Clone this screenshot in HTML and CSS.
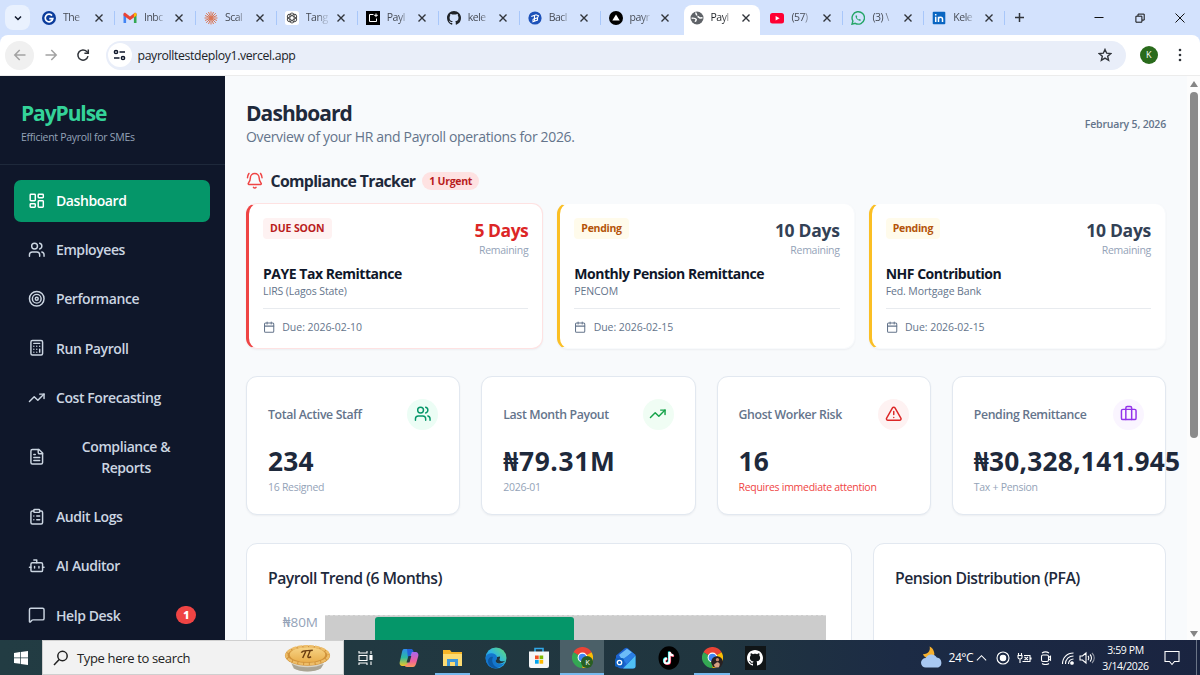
FILE: index.html
```html
<!DOCTYPE html>
<html lang="en">
<head>
<meta charset="utf-8">
<title>PayPulse</title>
<link rel="stylesheet" href="styles.css">
</head>
<body>
<svg class="defs" width="0" height="0">
  <defs>
    <symbol id="users" viewBox="0 0 24 24"><path d="M16 21v-2a4 4 0 0 0-4-4H6a4 4 0 0 0-4 4v2"/><circle cx="9" cy="7" r="4"/><path d="M22 21v-2a4 4 0 0 0-3-3.87M16 3.13a4 4 0 0 1 0 7.75"/></symbol>
    <symbol id="trend" viewBox="0 0 24 24"><path d="M22 7l-8.5 8.5-5-5L2 17"/><path d="M16 7h6v6"/></symbol>
    <symbol id="calendar" viewBox="0 0 24 24"><path d="M8 2v4M16 2v4M3 10h18"/><rect x="3" y="4" width="18" height="18" rx="2"/></symbol>
    <symbol id="close" viewBox="0 0 10 10"><path d="M1.5 1.5l7 7M8.5 1.5l-7 7"/></symbol>
    <symbol id="github" viewBox="0 0 16 16"><path fill="currentColor" stroke="none" d="M8 0C3.58 0 0 3.58 0 8c0 3.54 2.29 6.53 5.47 7.59.4.07.55-.17.55-.38 0-.19-.01-.82-.01-1.49-2.01.37-2.53-.49-2.69-.94-.09-.23-.48-.94-.82-1.13-.28-.15-.68-.52-.01-.53.63-.01 1.08.58 1.23.82.72 1.21 1.87.87 2.33.66.07-.52.28-.87.51-1.07-1.78-.2-3.64-.89-3.64-3.95 0-.87.31-1.59.82-2.15-.08-.2-.36-1.02.08-2.12 0 0 .67-.21 2.2.82.64-.18 1.32-.27 2-.27s1.36.09 2 .27c1.53-1.04 2.2-.82 2.2-.82.44 1.1.16 1.92.08 2.12.51.56.82 1.27.82 2.15 0 3.07-1.87 3.75-3.65 3.95.29.25.54.73.54 1.48 0 1.07-.01 1.93-.01 2.2 0 .21.15.46.55.38A8.01 8.01 0 0 0 16 8c0-4.42-3.58-8-8-8z"/></symbol>
    <symbol id="chrome" viewBox="0 0 24 24"><path fill="#ea4335" stroke="none" d="M12 12L1.6 6a12 12 0 0 1 20.8 0z"/><path fill="#34a853" stroke="none" d="M12 12v12A12 12 0 0 1 1.6 6z"/><path fill="#fbbc04" stroke="none" d="M12 12L22.4 6A12 12 0 0 1 12 24z"/><circle cx="12" cy="12" r="5.6" fill="#fff" stroke="none"/><circle cx="12" cy="12" r="4.4" fill="#4285f4" stroke="none"/></symbol>
    <linearGradient id="cop1" x1="0" y1="0" x2="0" y2="1"><stop offset="0" stop-color="#2d8cf0"/><stop offset=".5" stop-color="#2cb9a0"/><stop offset="1" stop-color="#f3c623"/></linearGradient>
    <linearGradient id="cop2" x1="0" y1="0" x2="0" y2="1"><stop offset="0" stop-color="#a866f0"/><stop offset=".6" stop-color="#ef5f9c"/><stop offset="1" stop-color="#fb9a5b"/></linearGradient>
    <linearGradient id="edge1" x1="0" y1="1" x2="1" y2="0"><stop offset="0" stop-color="#1274d2"/><stop offset=".5" stop-color="#2db5e6"/><stop offset="1" stop-color="#64dc6e"/></linearGradient>
    <linearGradient id="pie1" x1="0" y1="0" x2="0" y2="1"><stop offset="0" stop-color="#f7d486"/><stop offset="1" stop-color="#e9ae4c"/></linearGradient>
  </defs>
</svg>

<header class="browser">
  <div class="tabs">
    <div class="tab-menu"><svg class="ln" width="10" height="10" viewBox="0 0 10 10"><path d="M2 3.5l3 3 3-3"/></svg></div>
    <div class="tab"><svg class="fav" viewBox="0 0 14 14"><circle cx="7" cy="7" r="7" fill="#0b3c9c"/><path d="M10 4.6a3.8 3.8 0 1 0 .8 3H7.300" fill="none" stroke="#fff" stroke-width="1.7"/></svg><span class="tab-title">The</span><svg class="x"><use href="#close"/></svg></div>
    <div class="tab"><svg class="fav" viewBox="0 0 14 14"><path d="M.5 3v9h2.600V5.500z" fill="#4285f4"/><path d="M13.500 3v9h-2.600V5.500z" fill="#34a853"/><path d="M.5 3c0-1.200 1.500-1.500 2.300-.8L7 5.500l4.200-3.300c.8-.7 2.300-.4 2.300.8v1.500L7 9.300.5 4.500z" fill="#ea4335"/><path d="M13.500 3v1.500l-2.600 2V2.500c1-.9 2.600-.6 2.600.5z" fill="#fbbc04"/></svg><span class="tab-title">Inbc</span><svg class="x"><use href="#close"/></svg></div>
    <div class="tab"><svg class="fav" viewBox="0 0 14 14"><path d="M7 .5v13M.5 7h13M2.200 2.200l9.600 9.600M11.800 2.200l-9.600 9.600M4.500 1l5 12M9.500 1l-5 12M1 4.500l12 5M1 9.500l12-5" stroke="#d97757" stroke-width="1"/></svg><span class="tab-title">Scal</span><svg class="x"><use href="#close"/></svg></div>
    <div class="tab"><svg class="fav" viewBox="0 0 14 14"><rect width="14" height="14" rx="2.500" fill="#fff"/><g fill="none" stroke="#444" stroke-width=".9"><rect x="4.900" y="2" width="4.200" height="10" rx="2.100"/><rect x="4.900" y="2" width="4.200" height="10" rx="2.100" transform="rotate(60 7 7)"/><rect x="4.900" y="2" width="4.200" height="10" rx="2.100" transform="rotate(120 7 7)"/></g></svg><span class="tab-title">Tang</span><svg class="x"><use href="#close"/></svg></div>
    <div class="tab"><svg class="fav" viewBox="0 0 14 14"><rect width="14" height="14" fill="#000"/><path d="M7.500 3.500H3.500v7h7V7.500M10 2.500v3.600M8.200 4.300h3.600" fill="none" stroke="#fff" stroke-width="1"/></svg><span class="tab-title">Payl</span><svg class="x"><use href="#close"/></svg></div>
    <div class="tab"><svg class="fav dark"><use href="#github"/></svg><span class="tab-title">kele</span><svg class="x"><use href="#close"/></svg></div>
    <div class="tab"><svg class="fav" viewBox="0 0 14 14"><circle cx="7" cy="7" r="6.600" fill="#1c51b9"/><path d="M3.300 5.500L8 3.800l2.500 1-1 2-4.500 1.400M5 8.200v2.500l4.500-1.600V6.800M6.500 4.500v5.500" fill="none" stroke="#fff" stroke-width="1.100"/></svg><span class="tab-title">Bacl</span><svg class="x"><use href="#close"/></svg></div>
    <div class="tab no-line"><svg class="fav" viewBox="0 0 14 14"><circle cx="7" cy="7" r="7" fill="#000"/><path d="M7 3.500l3.700 6H3.300z" fill="#fff"/></svg><span class="tab-title">payr</span><svg class="x"><use href="#close"/></svg></div>
    <div class="tab active no-line"><svg class="fav" viewBox="0 0 14 14"><circle cx="7" cy="7" r="6.500" fill="#5f6368"/><path d="M1.600 7.200c2-.2 4 0 4.600 1.200.4 1-1 1-.8 2.400M6 1.500c-.5 1.500 1 1.700.5 3M7.500 5.500c1.500.2 1.300 1.500 2.700 1.500l2.300-.2" fill="none" stroke="#fff" stroke-width="1.500"/></svg><span class="tab-title">Payl</span><svg class="x"><use href="#close"/></svg></div>
    <div class="tab"><svg class="fav" viewBox="0 0 14 14"><rect y="2" width="14" height="10.500" rx="2.500" fill="#ff0033"/><path d="M5.600 5l4 2.250-4 2.250z" fill="#fff"/></svg><span class="tab-title">(57)</span><svg class="x"><use href="#close"/></svg></div>
    <div class="tab"><svg class="fav" viewBox="0 0 14 14"><path d="M1 13.200l.9-3.200a6.200 6.200 0 1 1 2.300 2.300z" fill="none" stroke="#25a567" stroke-width="1.400"/><path d="M5.200 4c-1.400.8-.4 3 .8 4.200s3.300 2.200 4.100.9l-1.500-1.100-.9.600c-.9-.5-1.500-1.100-1.900-2l.5-.8z" fill="#25a567"/></svg><span class="tab-title">(3) \</span><svg class="x"><use href="#close"/></svg></div>
    <div class="tab"><svg class="fav" viewBox="0 0 14 14"><rect x=".7" y=".7" width="12.600" height="12.600" rx="1" fill="#0a66c2"/><path d="M3.700 5.700v5.300M6.500 5.700v5.300M6.500 8c0-2.500 4-2.500 4 0v3M3.700 3v1.400" fill="none" stroke="#fff" stroke-width="1.500"/></svg><span class="tab-title">Kele</span><svg class="x"><use href="#close"/></svg></div>
    <svg class="new-tab ln" width="11" height="11" viewBox="0 0 11 11"><path d="M5.500 1v9M1 5.500h9"/></svg>
    <div class="window-buttons">
      <svg class="wb" viewBox="0 0 12 12"><path d="M1.500 5.500h9"/></svg>
      <svg class="wb" viewBox="0 0 12 12"><path d="M1.900 4.200h6v6h-6zM4 4V2.100h6.200v6H8"/></svg>
      <svg class="wb" viewBox="0 0 12 12"><path d="M1.500 1.500l9 9M10.500 1.500l-9 9"/></svg>
    </div>
  </div>
  <div class="toolbar">
    <div class="back"><svg class="ln" width="14" height="14" viewBox="0 0 14 14"><path d="M12.500 7H2M6.700 2L1.800 7l4.900 5"/></svg></div>
    <svg class="ln fwd" width="14" height="14" viewBox="0 0 14 14"><path d="M1.500 7H12M7.300 2l4.900 5-4.900 5"/></svg>
    <svg class="ln reload" width="14" height="14" viewBox="0 0 14 14"><path d="M12 8.200A5.100 5.100 0 1 1 10.800 3.600L12.200 5"/><path d="M12.300 1.400v3.900H8.400"/></svg>
    <div class="address">
      <div class="site-info"><svg class="ln" width="13" height="12" viewBox="0 0 13 12"><circle cx="3" cy="3" r="1.600"/><path d="M6.500 3H12M1 9h5.500"/><circle cx="10" cy="9" r="1.600"/></svg></div>
      <span class="url">payrolltestdeploy1.vercel.app</span>
      <svg class="ln star" width="14" height="14" viewBox="0 0 24 24"><path d="M12 2.500l2.900 6.400 7 .7-5.300 4.600 1.600 6.900-6.200-3.700-6.200 3.700 1.600-6.900L2.100 9.600l7-.7z"/></svg>
    </div>
    <div class="avatar">K</div>
    <svg class="kebab" width="4" height="14" viewBox="0 0 4 14"><circle cx="2" cy="2" r="1.300"/><circle cx="2" cy="7" r="1.300"/><circle cx="2" cy="12" r="1.300"/></svg>
  </div>
</header>

<div class="app">
  <aside class="sidebar">
    <div class="brand">
      <div class="brand-name">PayPulse</div>
      <div class="brand-sub">Efficient Payroll for SMEs</div>
    </div>
    <nav class="nav">
      <a class="nav-item current"><svg class="ic" viewBox="0 0 24 24"><rect x="3" y="3" width="7" height="9" rx="1"/><rect x="14" y="3" width="7" height="5" rx="1"/><rect x="14" y="12" width="7" height="9" rx="1"/><rect x="3" y="16" width="7" height="5" rx="1"/></svg><span>Dashboard</span></a>
      <a class="nav-item"><svg class="ic"><use href="#users"/></svg><span>Employees</span></a>
      <a class="nav-item"><svg class="ic" viewBox="0 0 24 24"><circle cx="12" cy="12" r="10"/><circle cx="12" cy="12" r="6"/><circle cx="12" cy="12" r="2"/></svg><span>Performance</span></a>
      <a class="nav-item"><svg class="ic" viewBox="0 0 24 24"><rect x="4" y="2" width="16" height="20" rx="2"/><path d="M8 6h8M16 14v4M16 10h.01M12 10h.01M8 10h.01M12 14h.01M8 14h.01M12 18h.01M8 18h.01"/></svg><span>Run Payroll</span></a>
      <a class="nav-item"><svg class="ic"><use href="#trend"/></svg><span>Cost Forecasting</span></a>
      <a class="nav-item"><svg class="ic" viewBox="0 0 24 24"><path d="M15 2H6a2 2 0 0 0-2 2v16a2 2 0 0 0 2 2h12a2 2 0 0 0 2-2V7z"/><path d="M14 2v4a2 2 0 0 0 2 2h4M10 9H8M16 13H8M16 17H8"/></svg><span class="wide">Compliance &amp;<br>Reports</span></a>
      <a class="nav-item"><svg class="ic" viewBox="0 0 24 24"><rect x="8" y="2" width="8" height="4" rx="1"/><path d="M16 4h2a2 2 0 0 1 2 2v14a2 2 0 0 1-2 2H6a2 2 0 0 1-2-2V6a2 2 0 0 1 2-2h2M12 11h4M12 16h4M8 11h.01M8 16h.01"/></svg><span>Audit Logs</span></a>
      <a class="nav-item"><svg class="ic" viewBox="0 0 24 24"><path d="M12 8V4H8"/><rect x="4" y="8" width="16" height="12" rx="2"/><path d="M2 14h2M20 14h2M15 13v2M9 13v2"/></svg><span>AI Auditor</span></a>
      <a class="nav-item"><svg class="ic" viewBox="0 0 24 24"><path d="M22 17a2 2 0 0 1-2 2H6.800a2 2 0 0 0-1.400.6l-2.200 2.200A.7.7 0 0 1 2 21.300V5a2 2 0 0 1 2-2h16a2 2 0 0 1 2 2z"/></svg><span>Help Desk</span><b class="count">1</b></a>
    </nav>
  </aside>

  <main class="main">
    <div class="page-head">
      <div>
        <h1>Dashboard</h1>
        <p class="lead">Overview of your HR and Payroll operations for 2026.</p>
      </div>
      <div class="date">February 5, 2026</div>
    </div>

    <div class="tracker-head">
      <svg class="ic bell" viewBox="0 0 24 24"><path d="M10.268 21a2 2 0 0 0 3.464 0M22 8c0-2.300-.8-4.300-2-6M3.262 15.326A1 1 0 0 0 4 17h16a1 1 0 0 0 .740-1.673C19.410 13.956 18 12.499 18 8A6 6 0 0 0 6 8c0 4.499-1.411 5.956-2.738 7.326M4 2C2.800 3.700 2 5.700 2 8"/></svg>
      <h2>Compliance Tracker</h2>
      <span class="urgent">1 Urgent</span>
    </div>

    <section class="deadlines">
      <article class="deadline soon">
        <div class="dl-top"><span class="tag">DUE SOON</span><div class="dl-days"><div class="days">5 Days</div><div class="remaining">Remaining</div></div></div>
        <h3>PAYE Tax Remittance</h3><p class="agency">LIRS (Lagos State)</p>
        <div class="due"><svg class="ic cal"><use href="#calendar"/></svg><span>Due: 2026-02-10</span></div>
      </article>
      <article class="deadline">
        <div class="dl-top"><span class="tag">Pending</span><div class="dl-days"><div class="days">10 Days</div><div class="remaining">Remaining</div></div></div>
        <h3>Monthly Pension Remittance</h3><p class="agency">PENCOM</p>
        <div class="due"><svg class="ic cal"><use href="#calendar"/></svg><span>Due: 2026-02-15</span></div>
      </article>
      <article class="deadline">
        <div class="dl-top"><span class="tag">Pending</span><div class="dl-days"><div class="days">10 Days</div><div class="remaining">Remaining</div></div></div>
        <h3>NHF Contribution</h3><p class="agency">Fed. Mortgage Bank</p>
        <div class="due"><svg class="ic cal"><use href="#calendar"/></svg><span>Due: 2026-02-15</span></div>
      </article>
    </section>

    <section class="stats">
      <article class="stat">
        <div class="stat-top"><span>Total Active Staff</span><div class="bubble emerald"><svg class="ic"><use href="#users"/></svg></div></div>
        <div class="value">234</div><div class="note">16 Resigned</div>
      </article>
      <article class="stat">
        <div class="stat-top"><span>Last Month Payout</span><div class="bubble green"><svg class="ic"><use href="#trend"/></svg></div></div>
        <div class="value short">₦79.31M</div><div class="note">2026-01</div>
      </article>
      <article class="stat">
        <div class="stat-top"><span>Ghost Worker Risk</span><div class="bubble red"><svg class="ic" viewBox="0 0 24 24"><path d="M21.730 18l-8-14a2 2 0 0 0-3.480 0l-8 14A2 2 0 0 0 4 21h16a2 2 0 0 0 1.730-3M12 9v4M12 17h.01"/></svg></div></div>
        <div class="value">16</div><div class="note alert">Requires immediate attention</div>
      </article>
      <article class="stat">
        <div class="stat-top"><span>Pending Remittance</span><div class="bubble purple"><svg class="ic" viewBox="0 0 24 24"><rect x="2" y="6" width="20" height="14" rx="2"/><path d="M16 20V4a2 2 0 0 0-2-2h-4a2 2 0 0 0-2 2v16"/></svg></div></div>
        <div class="value">₦30,328,141.945</div><div class="note">Tax + Pension</div>
      </article>
    </section>

    <section class="charts">
      <article class="panel">
        <h4>Payroll Trend (6 Months)</h4>
        <div class="chart"><span class="axis">₦80M</span><div class="plot"><div class="bar"></div></div></div>
      </article>
      <article class="panel"><h4>Pension Distribution (PFA)</h4></article>
    </section>
  </main>

  <div class="scrollbar"><i class="up"></i><i class="thumb"></i><i class="down"></i></div>
</div>

<footer class="taskbar">
  <div class="start"><svg width="14" height="16" viewBox="0 0 14 16"><path fill="#fff" d="M0 3l6-.9v5.500H0zM6.700 2L14 .9v6.700H6.700zM0 8.300h6v5.500l-6-.9zM6.700 8.300H14V15l-7.300-1.100z"/></svg></div>
  <div class="search">
    <svg class="ln" width="16" height="16" viewBox="0 0 16 16"><circle cx="9.500" cy="6" r="4.700"/><path d="M6.200 9.500L1 15"/></svg>
    <span>Type here to search</span>
    <svg class="pie" width="47" height="28" viewBox="0 0 49 28"><path d="M5 14l5 11c7 4 21 4 28 0l6-11z" fill="#d8d3c6"/><path d="M8 20l2.500 5c7 4 21 4 28 0l3-5c-9 5-25 5-33.500 0z" fill="#aaa494"/><ellipse cx="24.500" cy="11.500" rx="23.500" ry="10.500" fill="#d0923a"/><ellipse cx="24.500" cy="11" rx="22" ry="9.300" fill="none" stroke="#edbd68" stroke-width="2.500" stroke-dasharray="5 1"/><ellipse cx="24.500" cy="10.500" rx="18.500" ry="7.800" fill="url(#pie1)"/><path d="M18 8.500c2-3.500 5-1.500 12-2.500M23 6.500l-3.500 7.500M27.500 6l-2.500 6c-.6 1.800 1.700 1.800 3.200.6" fill="none" stroke="#6b3d10" stroke-width="1.500"/></svg>
  </div>
  <div class="task"><svg width="16" height="16" viewBox="0 0 16 16" fill="none" stroke="#fff" stroke-width="1.100"><path d="M1 1v2h8V1M1 15v-2h8v2M1 5.500h8v5H1zM13 1v3M13 11.500V15"/><path d="M12 5.500h2v4h-2z" fill="#fff"/></svg></div>
  <div class="task"><svg width="22" height="22" viewBox="0 0 22 22"><path d="M6 2h6c2 0 2.500 1 3 3l-3 9c-1 4-2 5-4 5H5c-3 0-4-2-3-5L4 5c.5-2 1-3 2-3z" fill="url(#cop1)"/><path d="M14 5h3c3 0 4 2 3 5l-2 7c-.7 2-1.500 3-3 3H9c-1.500 0-2.300-1-2.500-2 2 0 3-.5 4-4z" fill="url(#cop2)"/><path d="M9 2h4c1.500 0 2.200 1 2.600 3h-2L11 14l-1-2z" fill="#2460d8"/><path d="M10.500 9l-2 6.500h3l1.800-6.500z" fill="#21383f"/></svg></div>
  <div class="task open"><svg width="21" height="20" viewBox="0 0 21 20"><path d="M1 2h7l1.500 2H20v14H1z" fill="#f5b529"/><path d="M1 6h19v12H1z" fill="#fcdb72"/><path d="M5 18v-7h11v7h-3v-4H8v4z" fill="#3f97d8"/></svg></div>
  <div class="task"><svg width="22" height="22" viewBox="0 0 22 22"><circle cx="11" cy="11" r="10.500" fill="url(#edge1)"/><path d="M.8 10C2 5 11 5 12 10c.5 3-2 3-1 5 1.500 3 6 2.500 9 .5C16 22 7 23 3 18 1 15.500.6 13 .8 10z" fill="#1476ce"/><path d="M8 10c-2 4 0 9 5 11-5 1-10-2-10-7 0-3 3-5 5-4z" fill="#0c59a4"/><path d="M12 10c.5 3-2 3-1 5 2 2.500 7 2 9.500-1.500-2 1.500-6 1-6-1 0-1 .8-1.500.5-3z" fill="#21343f"/></svg></div>
  <div class="task"><svg width="22" height="22" viewBox="0 0 22 22"><path d="M7 5V1.500h8V5" fill="none" stroke="#31a8e8" stroke-width="1.600"/><path d="M1 4.500h20V19a2 2 0 0 1-2 2H3a2 2 0 0 1-2-2z" fill="#f5f7f8"/><path d="M7 8.500h3.700v3.700H7z" fill="#f25022"/><path d="M11.500 8.500h3.700v3.700h-3.700z" fill="#7fba00"/><path d="M7 13h3.700v3.700H7z" fill="#00a4ef"/><path d="M11.500 13h3.700v3.700h-3.700z" fill="#ffb900"/></svg></div>
  <div class="task open focus"><svg width="21" height="21"><use href="#chrome"/></svg><b class="profile">K</b></div>
  <div class="task"><svg width="21" height="22" viewBox="0 0 21 22"><path d="M1 8.500L9.500 1.400a3 3 0 0 1 3.500 0L20.500 8v11a2.500 2.500 0 0 1-2.500 2.500H6a5 5 0 0 1-5-5z" fill="#1c62d0"/><path d="M4 8l8-6.300 5 3.500-9.500 8z" fill="#6cbcf7"/><path d="M8 12l9.500-6.500 3 2.500-9 9z" fill="#2b7fe4"/><path d="M20.500 8.500V19a2.500 2.500 0 0 1-2.500 2.500H8z" fill="#4fc0f5"/><rect y="11" width="9" height="9" rx="1.800" fill="#0f60bf"/><circle cx="4.500" cy="15.500" r="2.200" fill="none" stroke="#fff" stroke-width="1.300"/></svg></div>
  <div class="task"><svg width="22" height="24" viewBox="0 0 22 24"><ellipse cx="11" cy="12" rx="10.500" ry="11.800" fill="#000"/><g fill="none" stroke-width="2"><path d="M11.500 6v9a2.500 2.500 0 1 1-2.500-2.500M11.500 6c.3 2.300 1.800 3.500 4 3.600" stroke="#25f4ee" transform="translate(-.6 -.5)"/><path d="M11.500 6v9a2.500 2.500 0 1 1-2.500-2.500M11.500 6c.3 2.300 1.800 3.500 4 3.600" stroke="#fe2c55" transform="translate(.6 .5)"/><path d="M11.500 6v9a2.500 2.500 0 1 1-2.500-2.500M11.500 6c.3 2.300 1.800 3.500 4 3.600" stroke="#fff"/></g></svg></div>
  <div class="task open"><svg width="21" height="21"><use href="#chrome"/></svg><svg class="photo" viewBox="0 0 13 13"><circle cx="6.500" cy="6.500" r="6.500" fill="#282021"/><circle cx="7" cy="4" r="1.800" fill="#c58a70"/><path d="M4.500 12.500L3 9.500 6 7c2-1 3.500.5 3.500 2.500l-1 3z" fill="#d7a183"/></svg></div>
  <div class="task"><div class="gh"><svg width="16" height="16"><use href="#github"/></svg></div></div>
  <div class="tray">
    <svg class="weather" width="22" height="23" viewBox="0 0 23 23"><path d="M9 0c1 4-1 8-7 8 2 5 10 6 12 0 0-3-2-7-5-8z" fill="#f5b02e"/><path d="M5 22a5 5 0 0 1 0-10 6.500 6.500 0 0 1 11.500-.5A5.500 5.500 0 0 1 18 22z" fill="#a8c8f2"/></svg>
    <span class="temp">24°C</span>
    <svg class="t caret" viewBox="0 0 14 14"><path d="M2 9.500l5-5 5 5"/></svg>
    <svg class="t rec" viewBox="0 0 14 14"><circle cx="7" cy="7" r="6"/><circle cx="7" cy="7" r="2.700" fill="#fff"/></svg>
    <svg class="t plug" viewBox="0 0 15 14"><path d="M1.500 2v2M4.500 2v2M1 4.500h4v2c0 2-4 2-4 0zM3 8v4M7 4.500h6v6H5.500M14 6.500v2M7.500 6l3.500 3M11 6L7.500 9"/></svg>
    <svg class="t meet" viewBox="0 0 14 14"><rect x="2.500" y="4" width="7" height="6.500" rx="1.500"/><path d="M9.500 6.500l2-1.300v4l-2-1.300M3 2c2-1.300 5-1.300 7 0M3 12.500c2 1.200 5 1.200 7 0"/></svg>
    <svg class="t wifi" viewBox="0 0 14 14"><path d="M1.500 13C1.500 6.500 6 2 12.500 2M4.500 13C4.500 8 8 5 12.500 5M7.500 13c0-3 2-5 5-5"/><circle cx="11" cy="12" r="1.300" fill="#fff"/></svg>
    <svg class="t vol" viewBox="0 0 16 14"><path d="M1 5h2.500L7 2v10L3.500 9H1zM9 5c1 1 1 3 0 4M11 3.500c2 2 2 5 0 7"/><path d="M13 2c3 3 3 7 0 10" stroke-opacity=".5"/></svg>
    <div class="clock"><div>3:59 PM</div><div>3/14/2026</div></div>
    <svg class="t action" viewBox="0 0 16 16"><path d="M1 1.500h14v10h-4.500L8 14.500l-2.500-3H1z"/></svg>
    <i class="peek"></i>
  </div>
</footer>
</body>
</html>
```
FILE: styles.css
```css
* { box-sizing: border-box; }
body { margin: 0; width: 1200px; height: 675px; overflow: hidden; display: flex; flex-direction: column; background: #f8fafc; color: #0f172a; font-family: "Segoe UI", "Open Sans", "Noto Sans", sans-serif; font-size: 14px; line-height: 21px; letter-spacing: -0.02em; }
h1, h2, h3, h4, p { margin: 0; }
svg { display: block; flex: none; }
.defs { position: absolute; }
.ln { fill: none; stroke: currentColor; stroke-width: 1.5; }
.ic { width: 17.5px; height: 17.5px; fill: none; stroke: currentColor; stroke-width: 2; stroke-linecap: round; stroke-linejoin: round; }

/* Browser chrome */
.browser { height: 76px; flex: none; background: #d3e2fd; }
.tabs { height: 35px; display: flex; align-items: center; }
.tab-menu { width: 25px; height: 25px; margin: 0 4px 0 5px; border-radius: 8px; background: #e9f1fe; display: flex; align-items: center; justify-content: center; }
.tab { position: relative; width: 80.95px; height: 30px; margin-top: 5px; padding: 0 0 5px 8px; display: flex; align-items: center; flex: none; font-size: 10.5px; color: #474c55; }
.tab::after { content: ""; position: absolute; right: 0; top: 6px; width: 1px; height: 14px; background: #a8c7fa; }
.no-line::after { display: none; }
.fav { width: 14px; height: 14px; margin-right: 7px; }
.dark { color: #1f2328; }
.tab-title { width: 24px; white-space: nowrap; margin-right: 6.500px; letter-spacing: -0.045em; -webkit-mask-image: linear-gradient(90deg, #000 50%, rgb(0 0 0 / 25%) 80%); mask-image: linear-gradient(90deg, #000 50%, rgb(0 0 0 / 25%) 80%); }
.x { width: 10px; height: 10px; fill: none; stroke: #30343a; stroke-width: 1.4; }
.active { color: #1f2328; isolation: isolate; }
.active::before { content: ""; position: absolute; z-index: -1; left: 2px; top: 0; width: 76px; height: 30px; background: #fff; border-radius: 8px 8px 0 0; }
.new-tab { margin-left: 9px; color: #30343a; }
.window-buttons { margin-left: auto; display: flex; gap: 28.5px; padding-right: 14px; }
.wb { width: 12px; height: 12px; fill: none; stroke: #111; stroke-width: 1; }
.toolbar { height: 41px; padding: 0 18px 0 5px; display: flex; align-items: center; background: #fff; border-radius: 8px 8px 0 0; border-bottom: 1px solid #ececec; }
.back { width: 29px; height: 29px; border-radius: 50%; background: #f0f0f0; display: flex; align-items: center; justify-content: center; color: #a2a2a2; }
.fwd { margin-left: 10px; color: #a2a2a2; }
.reload { margin-left: 17.500px; color: #30343a; }
.address { width: 1020px; height: 29px; margin-left: 16px; padding: 0 14px 0 2px; border-radius: 15px; background: #e9eef9; display: flex; align-items: center; }
.site-info { width: 24px; height: 24px; border-radius: 50%; background: #fff; display: flex; align-items: center; justify-content: center; }
.url { margin-left: 6px; flex: 1; font-size: 12.3px; color: #202328; letter-spacing: -0.03em; }
.star { stroke-width: 2.4; color: #30343a; }
.avatar { width: 18px; height: 18px; margin-left: 14px; border-radius: 50%; background: #2a6b1c; color: #fff; font-size: 9px; line-height: 18px; text-align: center; }
.kebab { margin-left: auto; fill: #30343a; }

/* App shell */
.app { height: 564px; flex: none; display: flex; overflow: hidden; }
.sidebar { width: 225px; flex: none; background: #0f172a; color: #cbd5e1; }
.brand { height: 88.500px; padding: 25px 21px 0; border-bottom: 1px solid #1e293b; }
.brand-name { font-size: 21px; line-height: 25px; font-weight: 700; color: #34d399; letter-spacing: -0.052em; }
.brand-sub { font-size: 10.5px; line-height: 14px; margin-top: 3.5px; color: #94a3b8; }
.nav { padding: 15px 15px 0 14px; display: flex; flex-direction: column; gap: 7.1px; letter-spacing: -0.03em; }
.nav-item { padding: 10.550px 14px; display: flex; align-items: center; gap: 10.5px; border-radius: 7px; font-weight: 600; }
.current { background: #059669; color: #fff; }
.wide { flex: 1; text-align: center; }
.count { margin-left: auto; width: 20px; height: 18px; border-radius: 9px; background: #ef4444; color: #fff; font-size: 10.5px; line-height: 18px; text-align: center; }

/* Main column */
.main { width: 962px; flex: none; padding: 25px 21px 0; overflow: hidden; }
.page-head { display: flex; justify-content: space-between; align-items: center; height: 46px; }
h1 { font-size: 21px; line-height: 25px; color: #1e293b; letter-spacing: -0.044em; }
.lead { color: #64748b; white-space: nowrap; letter-spacing: -0.024em; }
.date { font-size: 10.5px; line-height: 14px; font-weight: 600; color: #64748b; letter-spacing: -0.016em; }
.tracker-head { margin-top: 23.500px; height: 21px; display: flex; align-items: center; }
.bell { color: #ef4444; }
h2 { margin: 0 7px; font-size: 15.8px; color: #1e293b; white-space: nowrap; font-weight: 700; letter-spacing: -0.042em; }
.urgent { height: 18px; padding: 0 7px; border-radius: 9px; background: #fee2e2; color: #b91c1c; font-size: 10.5px; font-weight: 700; line-height: 18px; }
.deadlines { margin-top: 11px; display: grid; grid-template-columns: repeat(3, 1fr); gap: 14px; margin-right: 0; }
.deadline { height: 146px; padding: 14px 14px 0; border: 1px solid #f8fafc; border-left: 3.5px solid #fbbf24; border-radius: 11px; background: #fff; box-shadow: 0 1px 2px rgb(15 23 42 / 5%); }
.soon { border-color: #fee2e2; border-left-color: #ef4444; }
.dl-top { display: flex; justify-content: space-between; height: 45.500px; }
.tag { height: 21px; padding: 0 7px; border-radius: 4px; background: #fffbeb; color: #b45309; font-size: 10.5px; font-weight: 700; line-height: 21px; }
.soon .tag { background: #fef2f2; color: #b91c1c; letter-spacing: -0.01em; }
.dl-days { text-align: right; }
.days { font-size: 17.5px; font-weight: 700; line-height: 25px; color: #334155; }
.soon .days { color: #dc2626; letter-spacing: -0.028em; }
.remaining { font-size: 10.5px; line-height: 14px; color: #94a3b8; }
h3 { font-size: 14px; line-height: 21px; color: #0f172a; white-space: nowrap; letter-spacing: -0.034em; }
.agency { font-size: 10.5px; line-height: 14px; color: #64748b; letter-spacing: -0.01em; }
.due { margin-top: 10px; padding-top: 11px; border-top: 1px solid #e8ebef; display: flex; align-items: center; gap: 7px; font-size: 10.5px; line-height: 14px; color: #64748b; letter-spacing: -0.004em; }
.cal { width: 12.300px; height: 12.300px; }
.stats { margin-top: 27.500px; display: grid; grid-template-columns: repeat(4, minmax(0, 1fr)); gap: 21px; }
.stat { height: 139px; padding: 21px 16px 0 21px; border: 1px solid #e2e8f0; border-radius: 11px; background: #fff; box-shadow: 0 1px 2px rgb(15 23 42 / 5%); }
.stat-top { display: flex; align-items: center; justify-content: space-between; height: 32px; padding-right: 5px; font-size: 12.300px; font-weight: 600; color: #64748b; white-space: nowrap; letter-spacing: -0.03em; }
.bubble { width: 31px; height: 31px; border-radius: 50%; display: flex; align-items: center; justify-content: center; }
.emerald { background: #ecfdf5; color: #059669; }
.green { background: #f0fdf4; color: #16a34a; }
.red { background: #fef2f2; color: #dc2626; }
.purple { background: #faf5ff; color: #9333ea; }
.value { margin-top: 14px; font-size: 26.300px; line-height: 35px; font-weight: 700; color: #1e293b; white-space: nowrap; letter-spacing: 0.009em; }
.short { letter-spacing: 0.025em; }
.note { font-size: 10.5px; line-height: 15px; margin-top: 1px; color: #94a3b8; }
.alert { color: #ef4444; }
.charts { margin-top: 28px; display: grid; grid-template-columns: 606px 1fr; gap: 21px; }
.panel { height: 300px; padding: 21px; border: 1px solid #e2e8f0; border-radius: 11px; background: #fff; }
h4 { font-size: 15.8px; font-weight: 600; line-height: 26px; color: #1e293b; white-space: nowrap; letter-spacing: -0.034em; }
.chart { margin-top: 24px; display: flex; }
.axis { width: 57px; padding-right: 7px; text-align: right; font-size: 13.500px; line-height: 14px; color: #94a3b8; letter-spacing: 0; }
.plot { width: 501px; height: 100px; padding-left: 50px; background: #ccc; border-top: 1px dashed #ddd; }
.bar { width: 199px; height: 100px; margin-top: 1px; background: #059669; border-radius: 3px 3px 0 0; }
.scrollbar { width: 13px; flex: none; padding: 5px 0 3px; display: flex; flex-direction: column; align-items: center; background: #fcfcfc; }
.up, .down { border: 4px solid transparent; border-top: 0; border-bottom: 6px solid #858585; }
.thumb { width: 8px; height: 346px; margin-top: 5px; border-radius: 4px; background: #8b8b8b; }
.down { margin-top: auto; transform: rotate(180deg); }

/* Taskbar */
.taskbar { height: 35px; flex: none; display: flex; background: linear-gradient(90deg, #223c43, #20353f 60%, #1c2b45 75%, #1a2440); color: #fff; }
.start { width: 42px; display: flex; align-items: center; justify-content: center; }
.search { width: 302px; padding: 0 12px 0 10px; display: flex; align-items: center; background: #f2f2f2; border: 1px solid #cfcfcf; color: #222; font-size: 13px; letter-spacing: -0.026em; }
.search span { margin: 1px 0 0 8px; }
.pie { margin-left: auto; }
.task { position: relative; width: 43.300px; display: flex; align-items: center; justify-content: center; }
.open::after { content: ""; position: absolute; left: 4px; right: 4px; bottom: 0; height: 2px; background: #76b9ed; }
.focus { background: #4b6068; }
.focus::after { left: 0; right: 0; }
.profile, .photo { position: absolute; left: 21px; top: 16px; width: 12px; height: 12px; border-radius: 50%; }
.profile { background: #285e23; font-size: 7.5px; line-height: 12px; text-align: center; font-weight: 400; }
.gh { width: 21px; height: 24px; background: #101517; display: flex; align-items: center; justify-content: center; }
.tray { margin-left: auto; display: flex; align-items: center; }
.temp { margin-left: 6px; width: 26px; font-size: 12px; letter-spacing: -0.04em; }
.t { width: 14px; height: 14px; fill: none; stroke: #fff; stroke-width: 1.1; }
.caret { width: 13px; }
.rec { margin-left: 8px; }
.plug { width: 15px; margin-left: 7px; }
.meet { margin-left: 7px; }
.wifi { margin-left: 8px; }
.vol { width: 16px; margin-left: 4px; }
.clock { width: 50px; margin-left: 6px; font-size: 10.5px; line-height: 16px; text-align: center; letter-spacing: -0.035em; }
.action { width: 16px; height: 16px; margin-left: 13px; }
.peek { width: 1px; height: 35px; margin: 0 3.500px 0 16px; background: #6a7486; }
```
